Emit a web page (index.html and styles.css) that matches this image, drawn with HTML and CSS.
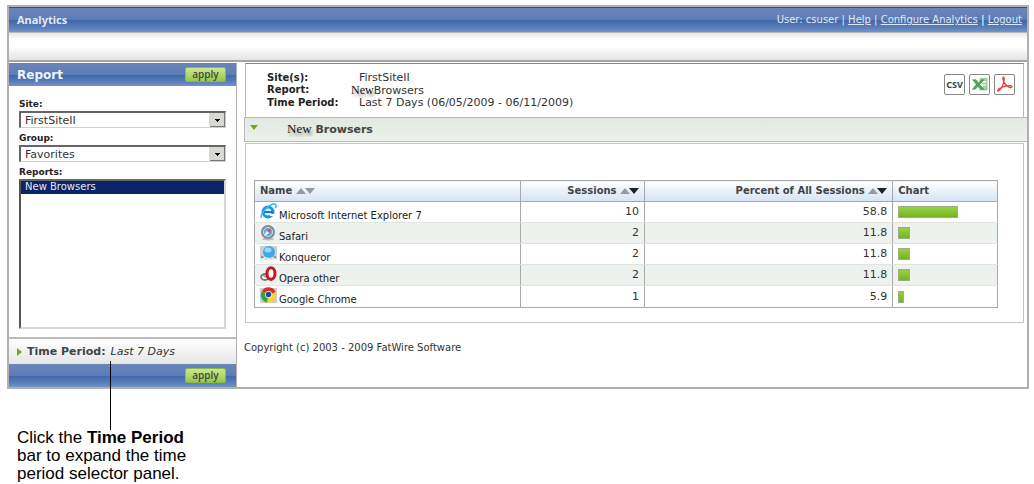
FILE: index.html
```html
<!DOCTYPE html>
<html lang="en">
<head>
<meta charset="utf-8">
<title>Analytics</title>
<link rel="stylesheet" href="styles.css">
</head>
<body>
<div class="frame">
  <header class="topbar blue">
    <h1 class="brand">Analytics</h1>
    <nav class="usernav">User: csuser | <a href="#">Help</a> | <a href="#">Configure Analytics</a> <b>|</b> <a href="#">Logout</a></nav>
  </header>
  <div class="subbar"></div>
  <div class="columns">
    <form class="sidebar">
      <div class="side-head blue"><h2 class="side-title">Report</h2><button class="apply" type="button">apply</button></div>
      <div class="side-body">
        <label class="label" for="site">Site:</label>
        <select class="drop" id="site"><option>FirstSiteII</option></select>
        <label class="label" for="group">Group:</label>
        <select class="drop" id="group"><option>Favorites</option></select>
        <label class="label" for="reports">Reports:</label>
        <select class="list" id="reports" size="9"><option selected>New Browsers</option></select>
      </div>
      <div class="time">
        <svg class="time-arrow" viewBox="0 0 5 8"><path d="M0 0L5 4L0 8Z" fill="#6cab16"/></svg>
        <strong class="time-title">Time Period:</strong><em class="time-value">Last 7 Days</em>
        <span class="pointer"></span>
      </div>
      <div class="side-foot blue"><button class="apply" type="button">apply</button></div>
    </form>
    <main class="main">
      <section class="info">
        <dl class="facts">
          <dt>Site(s):</dt><dd>FirstSiteII</dd>
          <dt>Report:</dt><dd class="fact-report"><span class="new">New</span>Browsers</dd>
          <dt>Time Period:</dt><dd>Last 7 Days (06/05/2009 - 06/11/2009)</dd>
        </dl>
        <div class="exports">
          <button class="export csv" type="button">CSV</button>
          <button class="export" type="button" aria-label="Excel"><svg viewBox="0 0 18 18"><path d="M9 4h7v2H9zM11 7h5v2h-5zM12 10h4v2h-4zM11 12h5v2H9z" fill="#a5d5a3"/><path d="M9 3.500h7V14H9" fill="none" stroke="#6fb073" stroke-width=".8"/><path d="M2.500 4.500h3.200L8 7.500l2.800-3h2.400L9.200 9l4 4.500H10L7.500 10.800 5 13.500H2.200L6 9z" fill="#4fa85c" stroke="#35833f" stroke-width=".5"/></svg></button>
          <button class="export" type="button" aria-label="PDF"><svg viewBox="0 0 18 18"><path d="M8 2C6.500 2.500 8.500 7 10 9s5 3.800 6 2.500-3-2-7-.8-6.500 3-6.500 4.200S5.500 14 7 10.500 9.500 2 8 2z" fill="none" stroke="#f23a40" stroke-width="1.200"/></svg></button>
        </div>
      </section>
      <h2 class="section">
        <svg class="section-arrow" viewBox="0 0 8 5"><path d="M0 0H8L4 5Z" fill="#6cab16"/></svg>
        <span><span class="new">New</span> Browsers</span>
      </h2>
      <section class="panel">
        <table class="grid">
          <colgroup><col class="c-name"><col class="c-sessions"><col class="c-percent"><col class="c-chart"></colgroup>
          <thead><tr>
            <th>Name <svg class="sort" viewBox="0 0 19 6"><path d="M0 6L5 0L10 6Z" fill="#999"/><path d="M9 0H19L14 6Z" fill="#999"/></svg></th>
            <th class="num">Sessions <svg class="sort" viewBox="0 0 19 6"><path d="M0 6L5 0L10 6Z" fill="#999"/><path d="M9 0H19L14 6Z" fill="#222"/></svg></th>
            <th class="num">Percent of All Sessions <svg class="sort" viewBox="0 0 19 6"><path d="M0 6L5 0L10 6Z" fill="#999"/><path d="M9 0H19L14 6Z" fill="#222"/></svg></th>
            <th>Chart</th>
          </tr></thead>
          <tbody>
            <tr><td><span class="browser"><svg class="icon" viewBox="0 0 17 17"><circle cx="8" cy="9" r="5" fill="#d8f2ff" stroke="#1e94e4" stroke-width="3"/><path d="M4 9h9" stroke="#1478cb" stroke-width="2"/><path d="M10 11h5v2h-5z" fill="#fff"/><path d="M1.500 15C-.5 11 11-1 15.500 1.500c1 .8.500 2.500-.3 3.500" fill="none" stroke="#35b6f5" stroke-width="1.500"/></svg>Microsoft Internet Explorer 7</span></td><td class="num">10</td><td class="num">58.8</td><td><div class="bar" style="width:60px"></div></td></tr>
            <tr><td><span class="browser"><svg class="icon" viewBox="0 0 17 17"><ellipse cx="8" cy="15" rx="6" ry="1.500" fill="#b9bdbd"/><circle cx="8" cy="8" r="6" fill="#5ca7df" stroke="#858d94" stroke-width="2"/><circle cx="8" cy="8" r="4.500" fill="none" stroke="#bfe2fa"/><path d="M12 4L9.200 9.200 6.800 6.800z" fill="#e44c3c"/><path d="M4 12l2.800-5.200 2.400 2.400z" fill="#fff"/></svg>Safari</span></td><td class="num">2</td><td class="num">11.8</td><td><div class="bar" style="width:12px"></div></td></tr>
            <tr><td><span class="browser"><svg class="icon" viewBox="0 0 17 17"><path d="M0 1h17v14H0z" fill="#c9d2d5"/><path d="M1 11l3 1-2 2zm15 0l-3 1 2 2zM4 14l3-1v2zm9 0l-3-1v2z" fill="#68767c"/><path d="M0 14l5-2h7l5 2v2H0z" fill="#f5f9fa" opacity=".7"/><circle cx="9" cy="7" r="6" fill="#3ea9e8"/><ellipse cx="8" cy="5" rx="3.500" ry="2.500" fill="#9bdcff"/></svg>Konqueror</span></td><td class="num">2</td><td class="num">11.8</td><td><div class="bar" style="width:12px"></div></td></tr>
            <tr><td><span class="browser"><svg class="icon" viewBox="0 0 17 17"><ellipse cx="5" cy="11" rx="4" ry="3" fill="none" stroke="#777" stroke-width="1.800"/><path d="M3 9l9 6" stroke="#888" stroke-width="1.500"/><ellipse cx="11" cy="7.500" rx="4" ry="5.800" fill="#fff" stroke="#c91620" stroke-width="3"/></svg>Opera other</span></td><td class="num">2</td><td class="num">11.8</td><td><div class="bar" style="width:12px"></div></td></tr>
            <tr><td><span class="browser"><svg class="icon" viewBox="0 0 17 17"><path d="M0 1h17v15H0z" fill="#c8ceca"/><circle cx="8.500" cy="8" r="7.500" fill="#f9d42f"/><path d="M8.500 8L2 4a7.500 7.500 0 0 1 13.500 1z" fill="#dd2c26"/><path d="M8.500 8L2 4a7.500 7.500 0 0 0 5 11.400z" fill="#35a447"/><circle cx="8.500" cy="7.500" r="3.500" fill="#fff"/><circle cx="8.500" cy="7.500" r="2.800" fill="#164f9c"/></svg>Google Chrome</span></td><td class="num">1</td><td class="num">5.9</td><td><div class="bar" style="width:6px"></div></td></tr>
          </tbody>
        </table>
      </section>
      <footer class="copy">Copyright (c) 2003 - 2009 FatWire Software</footer>
    </main>
  </div>
</div>
<p class="callout">Click the <strong>Time Period</strong><br>bar to expand the time<br>period selector panel.</p>
</body>
</html>
```
FILE: styles.css
```css
* { box-sizing: border-box; }
body {
  margin: 0;
  padding: 5px 5px 0 7px;
  background: #fff;
  color: #333;
  font: 10px/12px "DejaVu Sans", Verdana, sans-serif;
}
h1, h2, dl, dd, p { margin: 0; }
.frame { border: 2px solid #b0b0b0; }
.blue {
  background: linear-gradient(#6b84ba 0, #5d7db6 50%, #3e66a8 51%, #5f82bd 85%, #7394c9 100%);
}
.topbar {
  display: flex;
  align-items: center;
  justify-content: space-between;
  height: 25px;
  padding: 0 5px 0 8px;
  border-top: 1px solid #35507f;
  color: #e2e9f5;
}
.brand { font: bold 11px/14px "Noto Sans", sans-serif; }
.usernav a { color: inherit; }
.subbar {
  height: 30px;
  border-top: 1px solid #b8b8b8;
  border-bottom: 2px solid #a5a5a5;
  background: linear-gradient(#e8e8e8, #fff 25%, #fff 50%, #e4e4e4);
}
.columns { display: flex; padding-top: 1px; }
.sidebar {
  display: flex;
  flex-direction: column;
  flex: 0 0 228px;
  border-right: 1px solid #b0b0b0;
}
.side-head, .side-foot {
  display: flex;
  align-items: center;
  justify-content: space-between;
  height: 23px;
  padding: 0 10px 0 8px;
}
.side-foot { justify-content: flex-end; }
.side-title { color: #f0f4fa; font: bold 12px/16px "DejaVu Sans", sans-serif; }
.apply {
  width: 41px;
  height: 15px;
  padding: 0;
  border: 1px solid #8cb84c;
  border-radius: 2px;
  background: linear-gradient(#c9e88d, #b2da6c 50%, #93ca42);
  color: #444;
  font: 600 10px/11px "Open Sans", sans-serif;
}
.side-body {
  display: flex;
  flex-direction: column;
  height: 253px;
  padding: 12px 10px 8px;
  border-bottom: 2px solid #bbb;
}
.label { margin-bottom: 1px; color: #222; font: bold 9px/12px "DejaVu Sans", sans-serif; }
.drop {
  height: 17px;
  margin-bottom: 4px;
  padding: 0 4px;
  appearance: none;
  border: 1px solid #d0d0c8;
  border-top: 2px solid #666;
  border-left: 2px solid #666;
  border-radius: 0;
  background:
    linear-gradient(#111, #111) right 5px top 6px / 5px 1px no-repeat,
    linear-gradient(#111, #111) right 6px top 7px / 3px 1px no-repeat,
    linear-gradient(#111, #111) right 7px top 8px / 1px 1px no-repeat,
    linear-gradient(#d8d8d4, #d8d8d4) right 1px top 0 / 15px 13px no-repeat,
    linear-gradient(#777, #777) right / 15px 100% no-repeat,
    #fff;
  color: #333;
  font: 11px/13px "DejaVu Sans", sans-serif;
}
.list {
  flex: 1;
  min-height: 0;
  padding: 0;
  overflow: hidden;
  border: 2px solid #d8d8d0;
  border-top-color: #666;
  border-left-color: #555;
  border-radius: 0;
  background: #fff;
  font: 10px/13px "DejaVu Sans", sans-serif;
}
.list option { min-height: 13px; padding: 0 4px; }
.list option:checked {
  background: #0a246a linear-gradient(#0a246a, #0a246a);
  color: #e4e8f4;
  -webkit-text-fill-color: #e4e8f4;
}
.time {
  position: relative;
  display: flex;
  align-items: center;
  height: 25px;
  padding-left: 8px;
  background: linear-gradient(#fff, #e4e6e4);
}
.time-arrow { width: 5px; height: 8px; margin-right: 5px; }
.time-title { color: #444; font: bold 11px/14px "DejaVu Sans", sans-serif; }
.time-value { margin-left: 5px; font-size: 11px; }
.pointer { position: absolute; left: 101px; top: 22px; width: 1px; height: 69px; background: #000; }
.main { flex: 1; min-width: 0; padding-left: 7px; }
.info {
  display: flex;
  align-items: flex-start;
  justify-content: space-between;
  height: 54px;
  margin: 0 3px 0 1px;
  padding: 8px 8px 0 21px;
  border: 1px solid #b8b8b8;
  border-top-color: #888;
  border-bottom: 0;
}
.facts { display: grid; grid-template-columns: 92px auto; }
.facts dt { color: #222; font-weight: bold; }
.facts dd { font-size: 11px; }
.facts .fact-report { margin-left: -8px; }
.new { color: #111; font-family: "Liberation Serif", serif; text-shadow: 2px 3px 3px #999; }
.fact-report .new { font-size: 12px; }
.exports { display: flex; gap: 4px; padding-top: 2px; }
.export {
  width: 21px;
  height: 21px;
  padding: 0;
  border: 1px solid #888;
  border-radius: 2px;
  background: #fff;
}
.export svg { display: block; width: 19px; height: 19px; }
.csv { color: #2d4548; font: bold 9px/18px "Noto Sans", sans-serif; }
.section {
  display: flex;
  align-items: center;
  height: 25px;
  padding-left: 5px;
  border: 1px solid #b8bab8;
  border-right: 0;
  background: linear-gradient(#e3e8e2, #e6ebe5 40%, #edf1ec);
  color: #444;
  font: bold 11px/14px "DejaVu Sans", sans-serif;
}
.section .new { font-size: 13px; font-weight: normal; }
.section-arrow { width: 8px; height: 5px; margin: 0 29px 4px 0; }
.panel {
  margin: 1px 3px 0 1px;
  padding: 36px 25px 14px 8px;
  border: 1px solid #c4c4c4;
}
.grid {
  width: 100%;
  table-layout: fixed;
  border-collapse: collapse;
  border: 1px solid #a8a8a8;
}
.c-name { width: 35.8%; }
.c-sessions { width: 16.7%; }
.c-percent { width: 33.4%; }
.c-chart { width: 14.1%; }
.grid th {
  height: 21px;
  padding: 0 5px;
  border: 1px solid #a8a8a8;
  background: linear-gradient(#fff, #e8f0fa 50%, #d7e4f5);
  color: #444;
  font: bold 10px/12px "DejaVu Sans", sans-serif;
  text-align: left;
}
.grid td {
  height: 21px;
  padding: 0 5px;
  border: 1px solid #a8a8a8;
  border-top-color: #dfe4df;
  border-bottom-color: #dfe4df;
}
.grid tbody tr:nth-child(even) td { background: #eef2ee; }
.grid tbody tr:last-child td { height: 22px; border-bottom-color: #a8a8a8; }
.grid .num { text-align: right; }
.grid td.num { font-size: 11px; }
.sort { width: 19px; height: 6px; }
.browser { display: flex; align-items: flex-end; gap: 2px; color: #222; }
.icon { flex: none; width: 17px; height: 17px; margin-bottom: 2px; }
.bar {
  height: 12px;
  border: 1px solid #9bb080;
  background: linear-gradient(#98d244, #76b41e);
}
.copy { padding: 19px 0 32px; }
.callout {
  padding: 40px 0 0 10px;
  color: #000;
  font: 17px/18px "Liberation Sans", Arial, sans-serif;
}
```
